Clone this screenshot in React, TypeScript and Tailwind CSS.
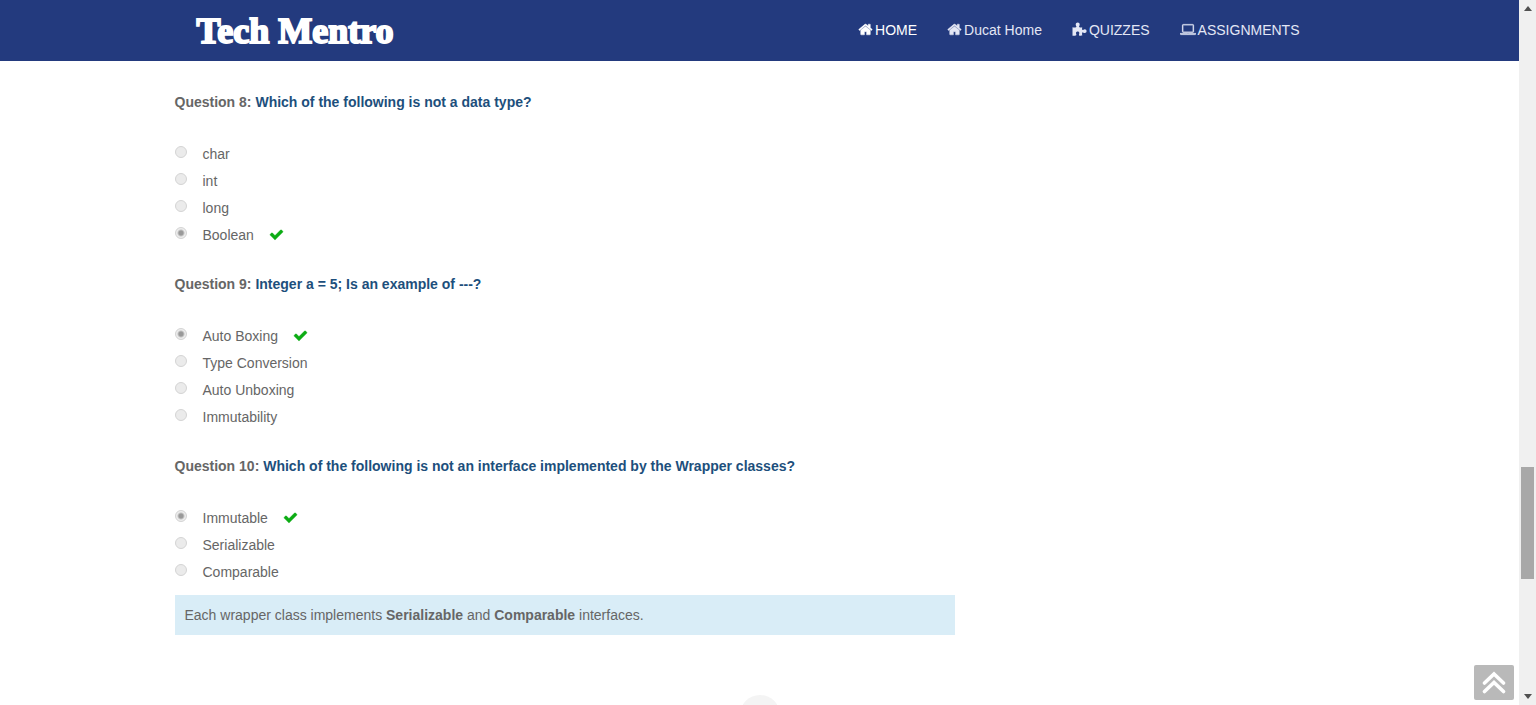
import type { ReactNode } from "react";

type Question = { id: number; text: string; options: string[]; answer: string };

const questions: Question[] = [
  {
    id: 8,
    text: "Which of the following is not a data type?",
    options: ["char", "int", "long", "Boolean"],
    answer: "Boolean",
  },
  {
    id: 9,
    text: "Integer a = 5; Is an example of ---?",
    options: ["Auto Boxing", "Type Conversion", "Auto Unboxing", "Immutability"],
    answer: "Auto Boxing",
  },
  {
    id: 10,
    text: "Which of the following is not an interface implemented by the Wrapper classes?",
    options: ["Immutable", "Serializable", "Comparable"],
    answer: "Immutable",
  },
];

function HomeIcon() {
  return (
    <svg className="size-[15px]" viewBox="0 0 1792 1792" fill="currentColor" stroke="currentColor" strokeWidth="50" aria-hidden="true">
      <path d="M1472 992v480q0 26-19 45t-45 19h-384v-384h-256v384h-384q-26 0-45-19t-19-45v-480q0-1 .5-3t.5-3l575-474 575 474q1 2 1 6zm223-69l-62 74q-8 9-21 11h-3q-13 0-21-7l-692-577-692 577q-12 8-24 7-13-2-21-11l-62-74q-8-10-7-23.5t11-21.5l719-599q32-26 76-26t76 26l244 204v-195q0-14 9-23t23-9h192q14 0 23 9t9 23v408l219 182q10 8 11 21.5t-7 23.5z" />
    </svg>
  );
}

function PuzzleIcon() {
  return (
    <svg className="size-[15px]" viewBox="0 0 15 15" fill="currentColor" aria-hidden="true">
      <path d="M.5 5.2C2.3 5.7 4.4 5.6 4.5 4.7C4.5 4.2 3.7 3.7 3.7 2.4C3.7 1.2 4.6.4 5.7.4C6.9.4 7.7 1.2 7.7 2.4C7.7 3.7 6.9 4.2 7 4.7C7.1 5.5 9 5.5 10.2 5.2C10 6.4 10 8 10.6 8.1C11.2 8.2 11.6 7.2 12.7 7.2C13.9 7.2 14.6 8 14.6 9.1C14.6 10.3 13.9 11.1 12.7 11.1C11.6 11.1 11.2 10.2 10.6 10.3C9.9 10.5 10 12.4 10.3 13.6C9.2 13.8 7.2 14 7 13.2C6.8 12.5 7.3 12.2 7.3 11.1C7.3 10.1 6.6 9.6 5.7 9.6C4.8 9.6 4 10.1 4 11.1C4 12.2 4.6 12.5 4.4 13.1C4.2 13.9 2.1 13.9.5 13.7Z" />
    </svg>
  );
}

function LaptopIcon() {
  return (
    <svg className="h-[15px] w-4" viewBox="0 0 1920 1792" fill="currentColor" stroke="currentColor" strokeWidth="30" aria-hidden="true">
      <path d="M416 1280q-66 0-113-47t-47-113v-704q0-66 47-113t113-47h1088q66 0 113 47t47 113v704q0 66-47 113t-113 47h-1088zm-32-864v704q0 13 9.5 22.5t22.5 9.5h1088q13 0 22.5-9.5t9.5-22.5v-704q0-13-9.5-22.5t-22.5-9.5h-1088q-13 0-22.5 9.5t-9.5 22.5zm1376 928h160v96q0 40-47 68t-113 28h-1600q-66 0-113-28t-47-68v-96h1760zm-720 96q16 0 16-16t-16-16h-160q-16 0-16 16t16 16h160z" />
    </svg>
  );
}

function CheckIcon() {
  return (
    <svg className="ml-[15px] size-[15px] text-[#0cac14]" viewBox="0 0 1792 1792" fill="currentColor" stroke="currentColor" strokeWidth="40" aria-label="Correct">
      <path d="M1671 566q0 40-28 68l-724 724-136 136q-28 28-68 28t-68-28l-136-136-362-362q-28-28-28-68t28-68l136-136q28-28 68-28t68 28l294 295 656-657q28-28 68-28t68 28l136 136q28 28 28 68z" />
    </svg>
  );
}

function NavLink({ icon, children, active = false }: { icon: ReactNode; children: ReactNode; active?: boolean }) {
  return (
    <a
      href="#"
      className={
        active
          ? "flex items-center gap-0.5 text-white"
          : "flex items-center gap-0.5 text-[#e4e7f5]"
      }
    >
      {icon}
      <span>{children}</span>
    </a>
  );
}

function QuestionBlock({ question }: { question: Question }) {
  return (
    <fieldset>
      <legend className="h-5 font-bold leading-5">
        Question {question.id}: <span className="text-[#1d4f7c]">{question.text}</span>
      </legend>
      <div className="pt-7">
        {question.options.map((option) => {
          const id = `q${question.id}-${option.replace(" ", "-")}`;
          const chosen = option === question.answer;
          return (
            <div key={option} className="flex h-[27px] items-center">
              <input
                id={id}
                type="radio"
                name={`q${question.id}`}
                defaultChecked={chosen}
                disabled
                className="mb-1 size-3 shrink-0 appearance-none rounded-full border border-[#d4d4d4] bg-[#ebebeb] checked:bg-[radial-gradient(circle,#999_2px,#ededed_4px)]"
              />
              <label htmlFor={id} className="ml-4">
                {option}
              </label>
              {chosen && <CheckIcon />}
            </div>
          );
        })}
      </div>
    </fieldset>
  );
}

function ScrollRail() {
  return (
    <div className="flex w-[17px] shrink-0 flex-col items-center bg-[#f0f0f0] py-1.5" aria-hidden="true">
      <svg className="h-[5px] w-2" viewBox="0 0 8 5" fill="#505050">
        <path d="M4 0L8 5H0Z" />
      </svg>
      <div className="grow-[455]" />
      <div className="w-[13px] grow-[112] bg-[#a8a8a8]" />
      <div className="grow-[115]" />
      <svg className="h-[5px] w-2" viewBox="0 0 8 5" fill="#505050">
        <path d="M0 0H8L4 5Z" />
      </svg>
    </div>
  );
}

export default function App() {
  return (
    <div className="flex h-screen bg-white font-['Liberation_Sans',Arial,sans-serif] text-sm text-[#666]">
      <div className="relative flex min-w-0 flex-1 flex-col overflow-hidden">
        <header className="shrink-0 bg-[#233a7e]">
          <div className="mx-auto flex h-[61px] max-w-[1170px] items-center justify-between pl-[22px] pr-[45px]">
            <a
              href="#"
              className="whitespace-nowrap font-['Liberation_Serif',serif] text-[36px] font-bold leading-[60px] text-white [-webkit-text-stroke:2px_white]"
            >
              Tech Mentro
            </a>
            <nav className="flex gap-[30px] whitespace-nowrap pb-0.5">
              <NavLink icon={<HomeIcon />} active>HOME</NavLink>
              <NavLink icon={<HomeIcon />}>Ducat Home</NavLink>
              <NavLink icon={<PuzzleIcon />}>QUIZZES</NavLink>
              <NavLink icon={<LaptopIcon />}>ASSIGNMENTS</NavLink>
            </nav>
          </div>
        </header>

        <main className="mx-auto w-full max-w-[1170px] shrink-0 pt-[31px]">
          <div className="w-2/3">
            <div className="flex flex-col gap-[26px]">
              {questions.map((question) => (
                <QuestionBlock key={question.id} question={question} />
              ))}
            </div>
            <p className="mt-2.5 bg-[#d9edf7] p-2.5 leading-5">
              Each wrapper class implements <b>Serializable</b> and <b>Comparable</b> interfaces.
            </p>
          </div>
        </main>

        <div className="mx-auto mt-[60px] size-10 shrink-0 rounded-full bg-[#f4f4f4]" />

        <button
          type="button"
          aria-label="Back to top"
          className="absolute bottom-[5px] right-[5px] flex h-[35px] w-10 items-center justify-center rounded-xs bg-[#b9b9b9]"
        >
          <svg className="size-6" viewBox="0 0 24 24" fill="none" stroke="white" strokeWidth="3.6" strokeLinecap="round">
            <path d="M2.5 12L12 3L21.5 12M2.5 20.5L12 11.5L21.5 20.5" />
          </svg>
        </button>
      </div>
      <ScrollRail />
    </div>
  );
}
